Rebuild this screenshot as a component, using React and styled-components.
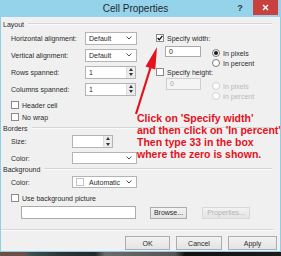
import React from 'react'
import styled, { createGlobalStyle } from 'styled-components'

const GlobalStyle = createGlobalStyle`
  html, body { margin: 0; padding: 0; background: #1e1e1e; }
  body {
    width: 281px;
    height: 256px;
    overflow: hidden;
    font-family: "Liberation Sans", Arial, sans-serif;
  }
`

const Window = styled.div`
  position: relative;
  width: 281px;
  height: 256px;
  display: flex;
  flex-direction: column;
  overflow: hidden;
  font-size: 7px;
  color: #2b2b2b;
`

const TitleBar = styled.div`
  flex: none;
  height: 17px;
  background: #95d3ea;
  display: flex;
  align-items: flex-start;
`

const Title = styled.div`
  flex: 1;
  height: 17px;
  line-height: 18px;
  padding-left: 37px;
  text-align: center;
  font-size: 10px;
  color: #1f2a30;
`

const HelpBtn = styled.div`
  width: 12px;
  height: 15px;
  line-height: 16px;
  text-align: center;
  font-size: 9px;
  font-weight: bold;
  color: #2a3a44;
`

const CloseBtn = styled.div`
  width: 25px;
  height: 15px;
  margin: 0 3px 0 7px;
  background: #c9413f;
  display: flex;
  align-items: center;
  justify-content: center;
`

const Body = styled.div`
  flex: 1;
  min-height: 0;
  background: #f0f0f0;
  border: 1px solid #8fcfe6;
  border-top: none;
  padding: 2px 2px 0 2px;
  display: flex;
  flex-direction: column;
`

const GroupHeader = styled.div`
  height: 10px;
  display: flex;
  align-items: center;
  gap: 4px;
  margin-top: ${p => p.$top || 0}px;
  margin-right: 6px;

  &::after {
    content: "";
    flex: 1;
    border-top: 1px solid #d6d6d6;
    border-bottom: 1px solid #fbfbfb;
  }
`

const LayoutContent = styled.div`
  display: flex;
  margin-top: 2px;
  padding-left: 8px;
`

const LeftCol = styled.div`
  width: 145px;
  display: flex;
  flex-direction: column;
`

const RightCol = styled.div`
  display: flex;
  flex-direction: column;
`

const Rows = styled.div`
  display: flex;
  flex-direction: column;
  gap: 3px;
`

const FieldRow = styled.div`
  height: ${p => p.$h || 14}px;
  display: flex;
  align-items: center;
  margin-top: ${p => p.$top || 0}px;
`

const FieldLabel = styled.div`
  width: ${p => p.$w}px;
  flex: none;
`

const Indent = styled.div`
  padding-left: 8px;
  display: flex;
  flex-direction: column;
`

const Dropdown = styled.div`
  box-sizing: border-box;
  width: ${p => p.$w}px;
  height: ${p => p.$h || 13}px;
  background: #fff;
  border: 1px solid #b4b4b4;
  display: flex;
  align-items: center;
  padding: 0 4px 0 3px;
  gap: 4px;

  span { flex: 1; }
`

const Swatch = styled.div`
  width: 6px;
  height: 6px;
  border: 1px solid #c4c4c4;
  background: #fff;
  margin-right: 1px;
`

const SpinBox = styled.div`
  box-sizing: border-box;
  width: ${p => p.$w}px;
  height: 13px;
  background: #fff;
  border: 1px solid #b4b4b4;
  display: flex;

  span { flex: 1; padding-left: 3px; line-height: 11px; }
`

const SpinButtons = styled.div`
  width: 8px;
  display: flex;
  flex-direction: column;
  background: #ececec;
  border-left: 1px solid #dcdcdc;
`

const SpinHalf = styled.div`
  flex: 1;
  display: flex;
  align-items: center;
  justify-content: center;
`

const CheckRow = styled.div`
  height: ${p => p.$h || 10}px;
  display: flex;
  align-items: center;
  gap: 3px;
  margin-top: ${p => p.$top || 0}px;
`

const Box = styled.div`
  box-sizing: border-box;
  width: 8px;
  height: 8px;
  background: #fff;
  border: 1px solid #8a8a8a;
  display: flex;
  align-items: center;
  justify-content: center;
`

const TextInput = styled.div`
  box-sizing: border-box;
  width: ${p => p.$w}px;
  height: ${p => p.$h}px;
  background: ${p => (p.$disabled ? '#f4f4f4' : '#fff')};
  border: 1px solid ${p => (p.$disabled ? '#cfcfcf' : '#ababab')};
  color: ${p => (p.$disabled ? '#a8a8a8' : '#2b2b2b')};
  padding: 1px 3px;
  line-height: 8px;
`

const SizeBlock = styled.div`
  display: flex;
  align-items: flex-start;
  margin-top: 1px;
  padding-left: ${p => p.$pad}px;
`

const RadioCol = styled.div`
  display: flex;
  flex-direction: column;
  margin-left: ${p => p.$left}px;
  margin-top: ${p => p.$top}px;
`

const RadioRow = styled.div`
  height: 10px;
  display: flex;
  align-items: center;
  gap: 3px;
  color: ${p => (p.$disabled ? '#b9b9b9' : '#2b2b2b')};
`

const Radio = styled.div`
  box-sizing: border-box;
  width: 8px;
  height: 8px;
  border-radius: 50%;
  background: #fff;
  border: 1px solid ${p => (p.$disabled ? '#d2d2d2' : '#7a7a7a')};
  display: flex;
  align-items: center;
  justify-content: center;

  &::after {
    content: "";
    display: ${p => (p.$on ? 'block' : 'none')};
    width: 4px;
    height: 4px;
    border-radius: 50%;
    background: #1b1b1b;
  }
`

const PictureRow = styled.div`
  height: 13px;
  display: flex;
  align-items: center;
  margin-top: 3px;
  padding-left: 18px;
`

const SmallButton = styled.div`
  box-sizing: border-box;
  width: ${p => p.$w}px;
  height: ${p => p.$h || 12}px;
  margin-left: ${p => p.$left || 0}px;
  background: linear-gradient(#f2f2f2, #e4e4e4);
  border: 1px solid ${p => (p.$disabled ? '#d8d8d8' : '#adadad')};
  color: ${p => (p.$disabled ? '#b4b4b4' : '#2b2b2b')};
  display: flex;
  align-items: center;
  justify-content: center;
`

const Separator = styled.div`
  margin: 10px 4px 0 -2px;
  border-top: 1px solid #d9d9d9;
  border-bottom: 1px solid #fbfbfb;
`

const ButtonBar = styled.div`
  display: flex;
  justify-content: flex-end;
  gap: 6px;
  margin-top: 5px;
  margin-right: 1px;
`

const DesktopStrip = styled.div`
  flex: none;
  height: 4px;
  background: linear-gradient(to right,
    #6d4e47 0, #6d4e47 24px, #3d5052 30px, #2d3436 60px,
    #24282b 95px, #6a6a6a 105px, #555 175px, #121212 185px, #1b1b1b 281px);
`

const Note = styled.div`
  position: absolute;
  left: 137px;
  top: 112px;
  color: #e4121c;
  font-weight: bold;
  font-size: 10.5px;
  line-height: 12px;
  white-space: pre;
`

const Overlay = styled.svg`
  position: absolute;
  left: 0;
  top: 0;
  pointer-events: none;
`

const Chevron = () => (
  <svg width="6" height="4" viewBox="0 0 6 4">
    <polyline points="0.5,0.5 3,3 5.5,0.5" fill="none" stroke="#555" strokeWidth="1" />
  </svg>
)

const Tick = () => (
  <svg width="6" height="6" viewBox="0 0 6 6">
    <polyline points="0.6,3 2.3,4.8 5.4,0.8" fill="none" stroke="#111" strokeWidth="1.3" />
  </svg>
)

const Spinner = () => (
  <SpinButtons>
    <SpinHalf>
      <svg width="4" height="3" viewBox="0 0 4 3"><polygon points="0,3 2,0 4,3" fill="#333" /></svg>
    </SpinHalf>
    <SpinHalf>
      <svg width="4" height="3" viewBox="0 0 4 3"><polygon points="0,0 4,0 2,3" fill="#333" /></svg>
    </SpinHalf>
  </SpinButtons>
)

const Select = ({ w, h, value, swatch }) => (
  <Dropdown $w={w} $h={h}>
    {swatch && <Swatch />}
    <span>{value}</span>
    <Chevron />
  </Dropdown>
)

const Check = ({ on, label, h, top }) => (
  <CheckRow $h={h} $top={top}>
    <Box>{on && <Tick />}</Box>
    {label}
  </CheckRow>
)

const RadioPair = ({ disabled, left, top, selected }) => (
  <RadioCol $left={left} $top={top}>
    <RadioRow $disabled={disabled}>
      <Radio $disabled={disabled} $on={selected === 'px'} />
      In pixels
    </RadioRow>
    <RadioRow $disabled={disabled}>
      <Radio $disabled={disabled} $on={selected === 'pct'} />
      In percent
    </RadioRow>
  </RadioCol>
)

export default function App() {
  return (
    <Window>
      <GlobalStyle />
      <TitleBar>
        <Title>Cell Properties</Title>
        <HelpBtn>?</HelpBtn>
        <CloseBtn>
          <svg width="7" height="7" viewBox="0 0 7 7">
            <path d="M1 1 L6 6 M6 1 L1 6" stroke="#fff" strokeWidth="1.4" />
          </svg>
        </CloseBtn>
      </TitleBar>

      <Body>
        <GroupHeader>Layout</GroupHeader>
        <LayoutContent>
          <LeftCol>
            <Rows>
              <FieldRow>
                <FieldLabel $w={74}>Horizontal alignment:</FieldLabel>
                <Select w={52} value="Default" />
              </FieldRow>
              <FieldRow>
                <FieldLabel $w={74}>Vertical alignment:</FieldLabel>
                <Select w={52} value="Default" />
              </FieldRow>
              <FieldRow>
                <FieldLabel $w={74}>Rows spanned:</FieldLabel>
                <SpinBox $w={51}><span>1</span><Spinner /></SpinBox>
              </FieldRow>
              <FieldRow>
                <FieldLabel $w={74}>Columns spanned:</FieldLabel>
                <SpinBox $w={51}><span>1</span><Spinner /></SpinBox>
              </FieldRow>
            </Rows>
            <Check label="Header cell" top={4} />
            <Check label="No wrap" top={2} />
          </LeftCol>

          <RightCol>
            <Check on label="Specify width:" h={14} />
            <SizeBlock $pad={9}>
              <TextInput $w={36} $h={11}>0</TextInput>
              <RadioPair left={11} top={2} selected="px" />
            </SizeBlock>
            <Check label="Specify height:" top={-1} />
            <SizeBlock $pad={10}>
              <TextInput $w={35} $h={12} $disabled>0</TextInput>
              <RadioPair left={11} top={3} disabled />
            </SizeBlock>
          </RightCol>
        </LayoutContent>

        <GroupHeader $top={1}>Borders</GroupHeader>
        <Indent>
          <FieldRow $h={13} $top={2}>
            <FieldLabel $w={61}>Size:</FieldLabel>
            <SpinBox $w={41}><span /><Spinner /></SpinBox>
          </FieldRow>
          <FieldRow $h={12} $top={4}>
            <FieldLabel $w={61}>Color:</FieldLabel>
            <Select w={65} h={12} value="" />
          </FieldRow>
        </Indent>

        <GroupHeader>Background</GroupHeader>
        <Indent>
          <FieldRow $h={12} $top={2}>
            <FieldLabel $w={61}>Color:</FieldLabel>
            <Select w={65} h={12} value="Automatic" swatch />
          </FieldRow>
          <Check label="Use background picture" top={5} />
        </Indent>
        <PictureRow>
          <TextInput $w={115} $h={13} />
          <SmallButton $w={37} $left={14}>Browse...</SmallButton>
          <SmallButton $w={48} $left={15} $disabled>Properties...</SmallButton>
        </PictureRow>

        <Separator />
        <ButtonBar>
          <SmallButton $w={45} $h={14}>OK</SmallButton>
          <SmallButton $w={46} $h={14}>Cancel</SmallButton>
          <SmallButton $w={49} $h={14}>Apply</SmallButton>
        </ButtonBar>
      </Body>
      <DesktopStrip />

      <Note>{"Click on 'Specify width'\nand then click on 'In percent'\nThen type 33 in the box\nwhere the zero is shown."}</Note>
      <Overlay width="281" height="256" viewBox="0 0 281 256">
        <line x1="136" y1="114" x2="151" y2="66" stroke="#e4121c" strokeWidth="2.2" />
        <polygon points="157,47 145.5,66.6 155.3,69.6" fill="#e4121c" />
      </Overlay>
    </Window>
  )
}
